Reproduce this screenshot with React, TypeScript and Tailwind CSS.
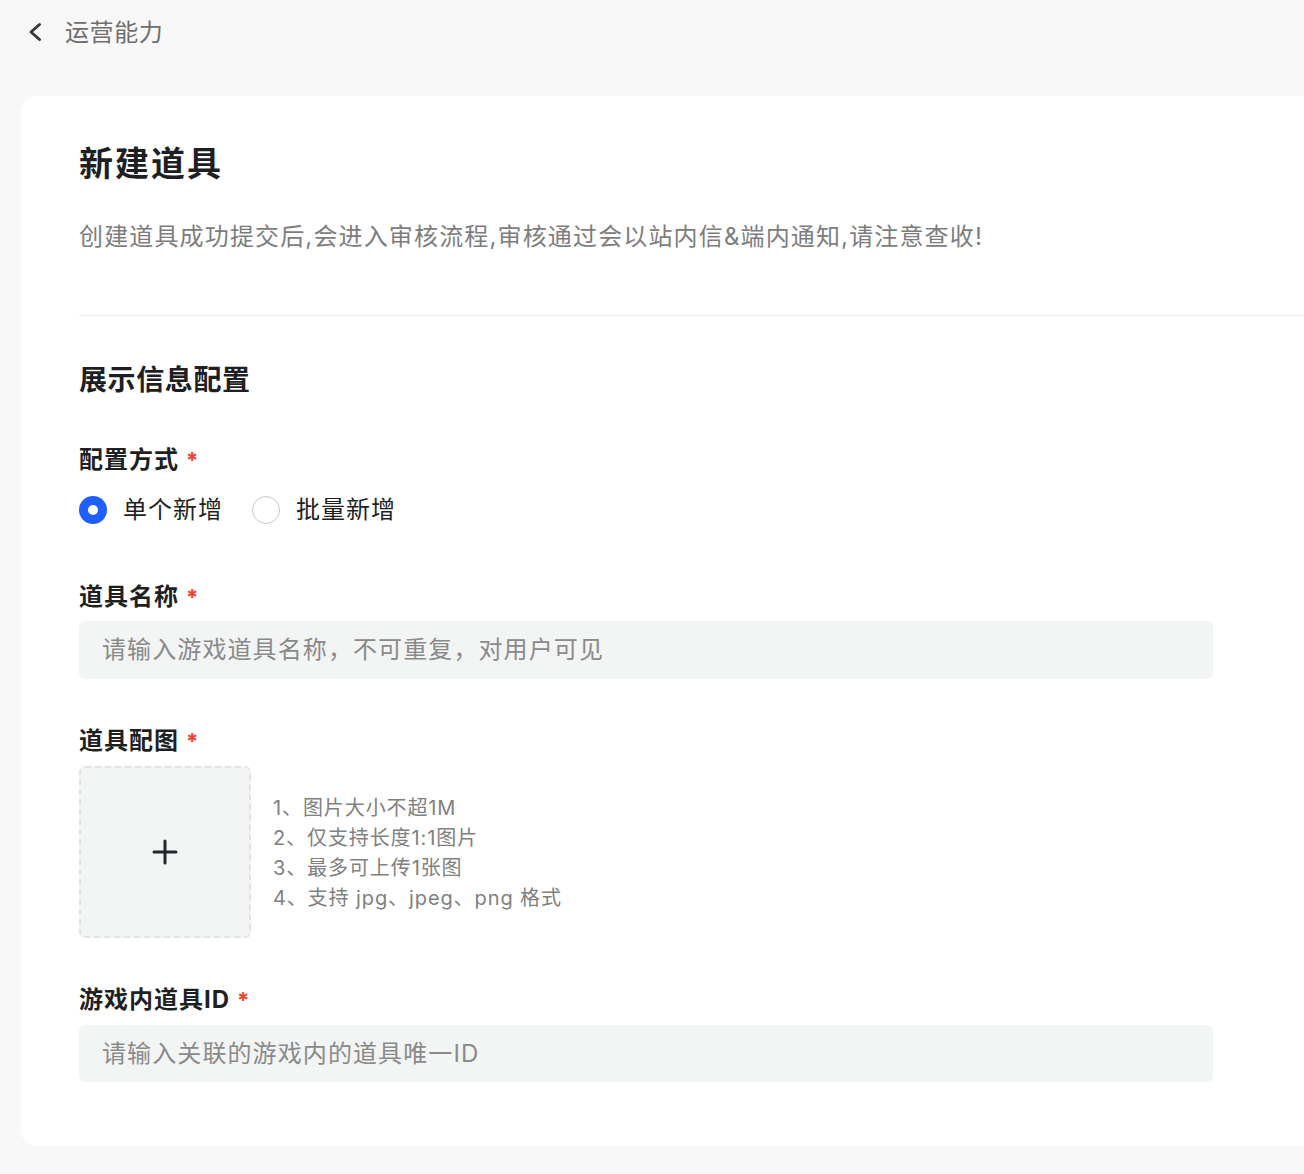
import React from "react";

const font = { fontFamily: 'Inter, "Noto Sans CJK SC", "Noto Sans", sans-serif' };

function Label({ children }: { children: React.ReactNode }) {
  return (
    <div className="flex h-[32px] items-center pt-[1px] text-[24px] font-bold leading-[32px] tracking-[1px] text-[#1d1f22]">
      <span>{children}</span>
      <span className="ml-[7px] text-[22px] text-[#f5412d]">*</span>
    </div>
  );
}

export default function App() {
  return (
    <div className="h-[1174px] w-[1304px] overflow-hidden bg-[#f8f8f8]" style={font}>
      <div className="flex h-[64px] items-center pl-[27px]">
        <svg width="16" height="20" viewBox="0 0 16 20" fill="none">
          <polyline points="12.5,2.5 4,10 12.5,17.5" stroke="#3a3a3a" strokeWidth="3" strokeLinecap="round" strokeLinejoin="round" />
        </svg>
        <span className="ml-[22px] pt-[1px] text-[24px] leading-[32px] tracking-[0.6px] text-[#6e6e6e]">运营能力</span>
      </div>
      <div className="ml-[21px] mt-[32px] h-[1050px] w-[1340px] rounded-l-[16px] bg-white pl-[58px]">
        <div className="pt-[46px]">
          <div className="h-[44px] text-[34px] font-bold leading-[44px] tracking-[2px] text-[#1d1f22]">新建道具</div>
          <div className="mt-[34px] h-[34px] text-[24px] leading-[34px] tracking-[1.15px] text-[#7d7d7d]">
            创建道具成功提交后,会进入审核流程,审核通过会以站内信&amp;端内通知,请注意查收!
          </div>
          <div className="mt-[61px] h-px w-full bg-[#ebebeb]" />
          <div className="mt-[46px] h-[36px] text-[28px] font-bold leading-[36px] tracking-[0.6px] text-[#1d1f22]">展示信息配置</div>

          <div className="mt-[45px]">
            <Label>配置方式</Label>
          </div>
          <div className="mt-[19px] flex h-[32px] items-center text-[24px] tracking-[1px] text-[#1d1f22]">
            <span className="flex h-[28px] w-[28px] items-center justify-center rounded-full bg-[#1f5eff]">
              <span className="h-[10px] w-[10px] rounded-full bg-white" />
            </span>
            <span className="ml-[16px]">单个新增</span>
            <span className="ml-[29px] h-[28px] w-[28px] rounded-full border border-[#c9c9c9] bg-white" />
            <span className="ml-[16px]">批量新增</span>
          </div>

          <div className="mt-[54px]">
            <Label>道具名称</Label>
          </div>
          <div className="mt-[9px] flex h-[58px] w-[1134px] items-center rounded-[6px] bg-[#f3f4f4] pl-[23px] text-[24px] tracking-[1.1px] text-[#8a8a8a]">
            请输入游戏道具名称，不可重复，对用户可见
          </div>

          <div className="mt-[45px]">
            <Label>道具配图</Label>
          </div>
          <div className="mt-[10px] flex items-center">
            <div className="flex h-[172px] w-[172px] items-center justify-center rounded-[6px] border-2 border-dashed border-[#e3e3e3] bg-[#f3f4f4]">
              <svg width="26" height="26" viewBox="0 0 26 26" fill="none">
                <path d="M13 2v22M2 13h22" stroke="#23262a" strokeWidth="3" strokeLinecap="round" />
              </svg>
            </div>
            <div className="ml-[22px] pt-[2px] text-[20px] leading-[30px] tracking-[0.9px] text-[#808080]">
              <div>1、图片大小不超1M</div>
              <div>2、仅支持长度1:1图片</div>
              <div>3、最多可上传1张图</div>
              <div>4、支持 jpg、jpeg、png 格式</div>
            </div>
          </div>

          <div className="mt-[45px]">
            <Label>游戏内道具ID</Label>
          </div>
          <div className="mt-[10px] flex h-[57px] w-[1134px] items-center rounded-[6px] bg-[#f3f4f4] pl-[23px] text-[24px] tracking-[1.1px] text-[#8a8a8a]">
            请输入关联的游戏内的道具唯一ID
          </div>
        </div>
      </div>
    </div>
  );
}
